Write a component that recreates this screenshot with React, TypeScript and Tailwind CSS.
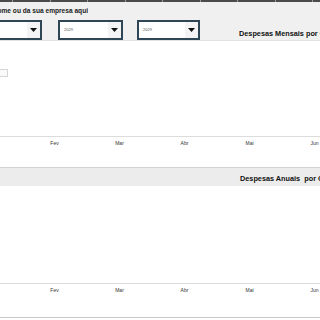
const months = ['Jan', 'Fev', 'Mar', 'Abr', 'Mai', 'Jun'];
const gridLines = [12, 50, 87, 125, 162, 200, 237, 275, 312];

function Dropdown({ value, className }: { value: string; className: string }) {
  return (
    <div className={`h-[20px] shrink-0 border-2 border-[#2f4656] bg-white flex items-center ${className}`}>
      <span className="flex-1 pl-[4px] text-[4px] leading-none text-[#555]">{value}</span>
      <div className="w-[13px] h-full flex items-center justify-center bg-[#f4f4f4]">
        <svg width="7" height="4" viewBox="0 0 7 4">
          <path d="M0 0h7L3.5 4z" fill="#111" />
        </svg>
      </div>
    </div>
  );
}

function MonthAxis() {
  return (
    <div className="flex ml-[-43px] pt-[4px]">
      {months.map((m) => (
        <div key={m} className="w-[65px] shrink-0 text-center text-[5px] leading-none text-[#333]">
          {m}
        </div>
      ))}
    </div>
  );
}

export default function App() {
  return (
    <div
      className="w-[320px] h-[320px] overflow-hidden bg-white flex flex-col"
      style={{ fontFamily: '"Liberation Sans", Arial, sans-serif' }}
    >
      {/* top strip */}
      <div className="h-[2px] bg-[#4b4b4b] flex shrink-0">
        {gridLines.map((x, i) => (
          <div key={i} className="w-px h-full bg-[#9a9a9a]" style={{ marginLeft: i === 0 ? x : 36.5 }} />
        ))}
      </div>

      {/* header band */}
      <div className="h-[39px] bg-[#f0f0f0] border-b border-[#e2e2e2] shrink-0 flex flex-col">
        <div className="w-[88px] flex justify-end overflow-hidden whitespace-nowrap pt-[4px]">
          <span className="text-[6.6px] leading-[9px] font-bold text-[#222]">Digite seu nome ou da sua empresa aqui</span>
        </div>
        <div className="flex items-end mt-[5px]">
          <Dropdown value="" className="w-[60px] ml-[-18px]" />
          <Dropdown value="2029" className="w-[65px] ml-[16px]" />
          <Dropdown value="2029" className="w-[63px] ml-[14px]" />
          <span className="shrink-0 ml-[39px] mb-[3px] text-[7.3px] leading-none font-bold text-[#111] whitespace-nowrap">
            Despesas Mensais por Categoria
          </span>
        </div>
      </div>

      {/* chart 1 */}
      <div className="h-[126px] shrink-0 flex flex-col">
        <div className="h-[28px]" />
        <div className="w-[8px] h-[8px] border border-[#d6d6d6] border-l-0 rounded-r-[1px] bg-[#fafafa]" />
        <div className="h-[59px]" />
        <div className="h-px bg-[#dcdcdc]" />
        <MonthAxis />
      </div>

      {/* band 2 */}
      <div className="h-[19px] bg-[#ececec] border-t border-[#d2d2d2] shrink-0 flex items-center">
        <span className="shrink-0 ml-[240px] mt-[3px] text-[7.3px] leading-none font-bold text-[#111] whitespace-nowrap">
          Despesas Anuais&nbsp; por Categoria
        </span>
      </div>

      {/* chart 2 */}
      <div className="h-[132px] shrink-0 flex flex-col">
        <div className="h-[97px]" />
        <div className="h-px bg-[#dcdcdc]" />
        <MonthAxis />
        <div className="flex-1" />
        <div className="h-px bg-[#c8c8c8]" />
      </div>
    </div>
  );
}
